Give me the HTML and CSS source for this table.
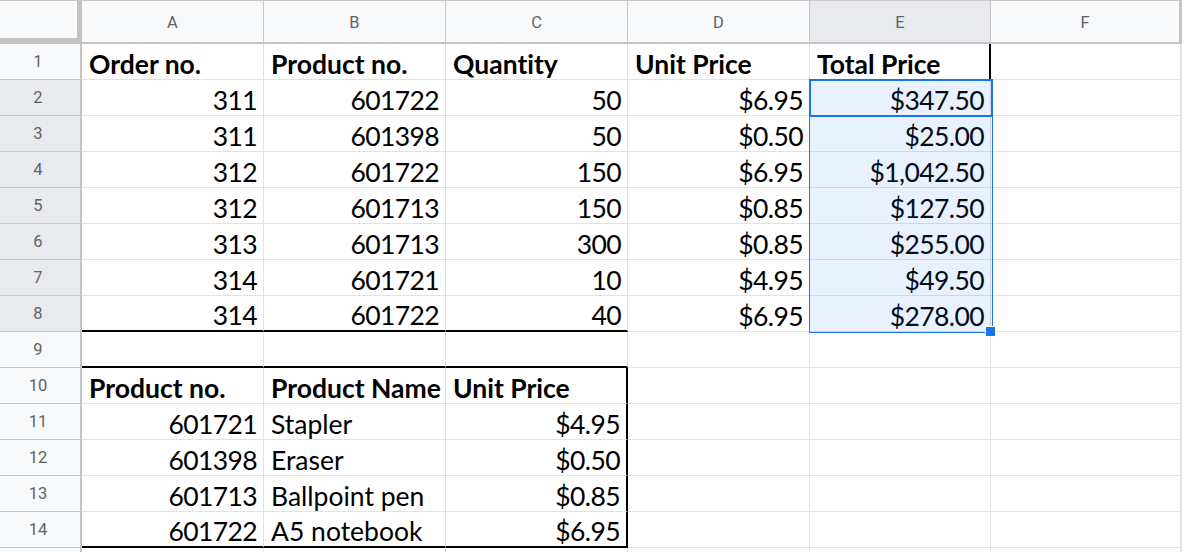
FILE: index.html
```html
<!DOCTYPE html>
<html>
<head>
<meta charset="utf-8">
<link rel="stylesheet" href="styles.css">
</head>
<body>
<div class="sheet">
  <div class="corner"></div>
  <div class="ch">A</div><div class="ch">B</div><div class="ch">C</div><div class="ch">D</div><div class="ch sel">E</div><div class="ch last">F</div>

  <div class="rh">1</div>
  <div class="c b">Order no.</div><div class="c b">Product no.</div><div class="c b">Quantity</div><div class="c b">Unit Price</div><div class="c b br">Total Price</div><div class="c last"></div>

  <div class="rh sel">2</div>
  <div class="c n">311</div><div class="c n">601722</div><div class="c n">50</div><div class="c n">$6.95</div><div class="c n">$347.50</div><div class="c last"></div>

  <div class="rh sel">3</div>
  <div class="c n">311</div><div class="c n">601398</div><div class="c n">50</div><div class="c n">$0.50</div><div class="c n">$25.00</div><div class="c last"></div>

  <div class="rh sel">4</div>
  <div class="c n">312</div><div class="c n">601722</div><div class="c n">150</div><div class="c n">$6.95</div><div class="c n">$1,042.50</div><div class="c last"></div>

  <div class="rh sel">5</div>
  <div class="c n">312</div><div class="c n">601713</div><div class="c n">150</div><div class="c n">$0.85</div><div class="c n">$127.50</div><div class="c last"></div>

  <div class="rh sel">6</div>
  <div class="c n">313</div><div class="c n">601713</div><div class="c n">300</div><div class="c n">$0.85</div><div class="c n">$255.00</div><div class="c last"></div>

  <div class="rh sel">7</div>
  <div class="c n">314</div><div class="c n">601721</div><div class="c n">10</div><div class="c n">$4.95</div><div class="c n">$49.50</div><div class="c last"></div>

  <div class="rh sel">8</div>
  <div class="c n bb">314</div><div class="c n bb">601722</div><div class="c n bb">40</div><div class="c n">$6.95</div><div class="c n">$278.00</div><div class="c last"></div>

  <div class="rh">9</div>
  <div class="c bb"></div><div class="c bb"></div><div class="c bb"></div><div class="c"></div><div class="c"></div><div class="c last"></div>

  <div class="rh">10</div>
  <div class="c b">Product no.</div><div class="c b">Product Name</div><div class="c b br">Unit Price</div><div class="c"></div><div class="c"></div><div class="c last"></div>

  <div class="rh">11</div>
  <div class="c n">601721</div><div class="c">Stapler</div><div class="c n br">$4.95</div><div class="c"></div><div class="c"></div><div class="c last"></div>

  <div class="rh">12</div>
  <div class="c n">601398</div><div class="c">Eraser</div><div class="c n br">$0.50</div><div class="c"></div><div class="c"></div><div class="c last"></div>

  <div class="rh">13</div>
  <div class="c n">601713</div><div class="c">Ballpoint pen</div><div class="c n br">$0.85</div><div class="c"></div><div class="c"></div><div class="c last"></div>

  <div class="rh">14</div>
  <div class="c n bb">601722</div><div class="c bb">A5 notebook</div><div class="c n br bb">$6.95</div><div class="c"></div><div class="c"></div><div class="c last"></div>

  <div class="rh"></div>
  <div class="c"></div><div class="c"></div><div class="c"></div><div class="c"></div><div class="c"></div><div class="c last"></div>

  <div class="range"></div>
  <div class="active"></div>
  <div class="handle"></div>
</div>
</body>
</html>
```

FILE: styles.css
```css
html, body {
  margin: 0;
  padding: 0;
  background: #ffffff;
  overflow: hidden;
}

.sheet {
  position: relative;
  display: grid;
  grid-template-columns: 82px 182px 182px 182px 182px 181px 191px;
  grid-template-rows: 44px repeat(15, 36px);
  width: 1182px;
}

.corner {
  box-sizing: border-box;
  background: #f8f9fa;
  border-top: 1px solid #c7c7c7;
  border-right: 5px solid #c2c2c2;
  border-bottom: 6px solid #c2c2c2;
}

.ch {
  box-sizing: border-box;
  background: #f8f9fa;
  border-top: 1px solid #c7c7c7;
  border-right: 1px solid #c7c7c7;
  border-bottom: 2px solid #c4c4c4;
  font-family: Roboto, "Liberation Sans", sans-serif;
  font-size: 16.5px;
  color: #5f6368;
  display: flex;
  align-items: center;
  justify-content: center;
  padding-top: 1px;
}

.ch.sel {
  background: #e8eaed;
}

.ch.last {
  border-right: 3px solid #c4c4c4;
}

.rh {
  box-sizing: border-box;
  background: #f8f9fa;
  border-right: 2px solid #c4c4c4;
  border-bottom: 1px solid #c7c7c7;
  font-family: Roboto, "Liberation Sans", sans-serif;
  font-size: 16.5px;
  color: #5f6368;
  display: flex;
  align-items: center;
  justify-content: center;
  padding-right: 4px;
}

.rh.sel {
  background: #e8eaed;
}

.c {
  box-sizing: border-box;
  border-right: 1px solid #e2e2e2;
  border-bottom: 1px solid #e2e2e2;
  font-family: Lato, "Open Sans", sans-serif;
  font-size: 26.5px;
  line-height: 1.04;
  font-variant-ligatures: none;
  color: #000000;
  display: flex;
  align-items: flex-end;
  justify-content: flex-start;
  padding: 0 5px 0 7px;
  white-space: nowrap;
  overflow: visible;
}

.c.b {
  font-weight: 700;
}

.c.n {
  justify-content: flex-end;
  letter-spacing: -0.6px;
  padding-right: 6px;
}

.c.last {
  border-right: 2px solid #e2e2e2;
}

.c.bb {
  border-bottom: 2px solid #000000;
}

.c.br {
  border-right: 2px solid #000000;
}

.range {
  position: absolute;
  left: 809px;
  top: 79px;
  width: 184px;
  height: 254px;
  box-sizing: border-box;
  border: 1px solid #1a73e8;
  background: rgba(26, 115, 232, 0.1);
  pointer-events: none;
}

.active {
  position: absolute;
  left: 809px;
  top: 79px;
  width: 184px;
  height: 38px;
  box-sizing: border-box;
  border: 2px solid #1a73e8;
  pointer-events: none;
}

.handle {
  position: absolute;
  left: 985px;
  top: 326px;
  width: 9px;
  height: 9px;
  background: #1a73e8;
  border: 1px solid #ffffff;
}
```
